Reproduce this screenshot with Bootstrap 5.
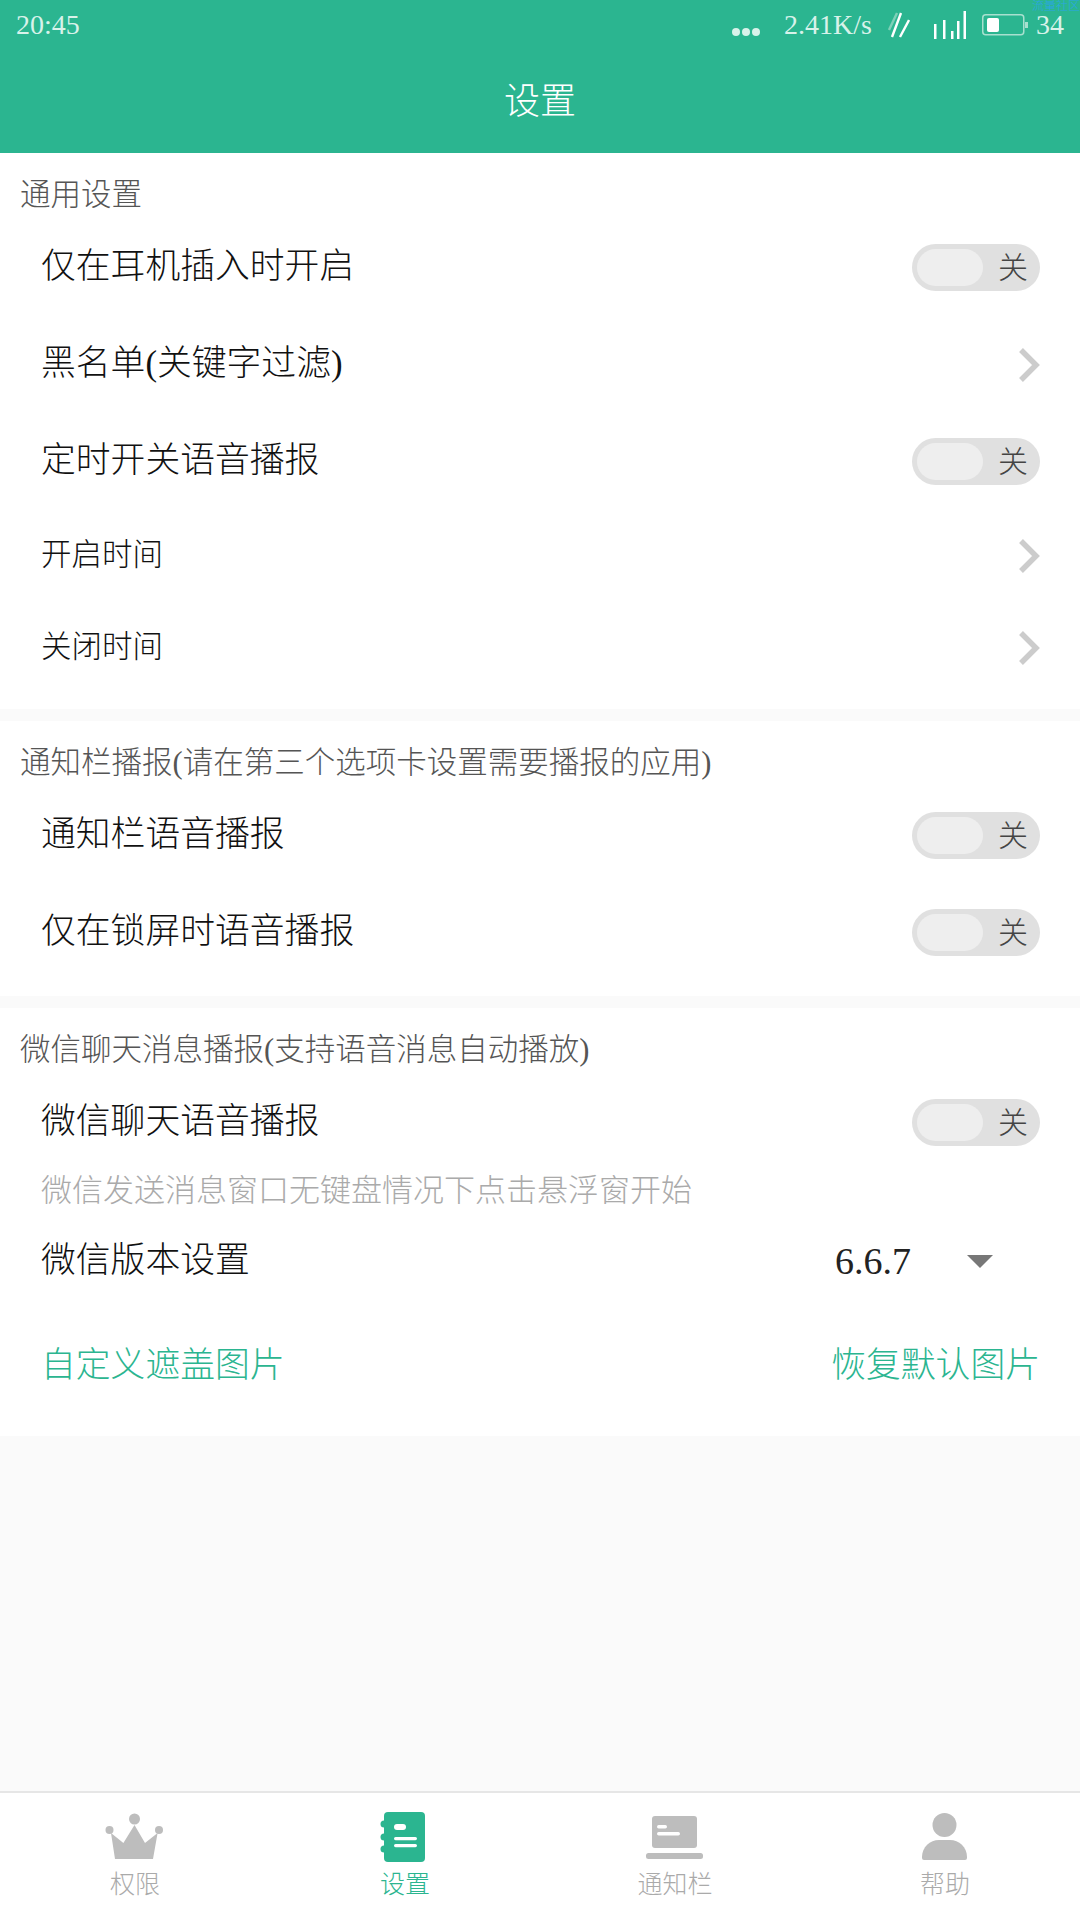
<!DOCTYPE html>
<html lang="zh-CN">
<head>
    <meta charset="UTF-8">
    <meta name="viewport" content="width=device-width, initial-scale=1">
    <title>设置</title>
    <link href="https://cdn.jsdelivr.net/npm/bootstrap@5.3.0/dist/css/bootstrap.min.css" rel="stylesheet">
    <style>
        html, body { height: 1920px; }
        body {
            background: #fafafa;
            font-family: "Liberation Serif", "Noto Sans CJK SC", serif;
            font-weight: 300;
            overflow: hidden;
        }
        .app-top { background: #2bb590; height: 153px; color: #fff; position: relative; }
        .status-line { height: 50px; padding: 0 16px; font-size: 28px; color: #d8f2ea; }
        .status-line svg { display: block; }
        .water-mark { position: absolute; top: -1px; right: 0; font-size: 12px; line-height: 14px; color: #2aa5e6; }
        .page-title { font-size: 36px; line-height: 50px; padding-top: 27px; text-align: center; }
        .setting-block { background: #fff; padding-bottom: 15px; margin-bottom: 12px; }
        .block-title { font-size: 30.5px; line-height: 48px; padding: 18px 20px 0; color: #555; }
        .setting-row { height: 97px; padding: 0 40px 0 41px; font-size: 34.8px; color: #111; }
        .setting-row.short-row { height: 92px; font-size: 30.5px; }
        .setting-row.ver-row { height: 100px; }
        .setting-row.link-row { height: 110px; color: #2bb590; }
        .switch-off { width: 128px; height: 47px; border-radius: 24px; background: #e0e0e0; padding: 5px 12px 5px 5px; font-size: 30px; color: #444; }
        .switch-knob { width: 66px; height: 37px; border-radius: 19px; background: #eee; }
        .hint-line { font-size: 31px; line-height: 40px; padding: 0 41px; color: #aaa; }
        .ver-num { font-size: 38px; color: #222; width: 132px; }
        .ver-arrow { width: 0; height: 0; border-left: 13px solid transparent; border-right: 13px solid transparent; border-top: 13px solid #777; margin-right: 7px; }
        .ver-pick { width: 205px; }
        .spacer-area { flex: 1 1 auto; }
        .tab-bar { height: 129px; background: #fff; border-top: 2px solid #e6e6e6; }
        .tab-item { width: 270px; color: #aaa; font-size: 25px; line-height: 30px; padding-top: 19px; }
        .tab-item svg { display: block; margin-bottom: 8px; }
        .tab-item.tab-on { color: #2bb590; }
    </style>
</head>
<body class="d-flex flex-column">
    <div class="app-top">
        <div class="water-mark">流量社区</div>
        <div class="status-line d-flex align-items-center">
            <span>20:45</span>
            <svg class="ms-auto" width="28" height="10" viewBox="0 0 28 10" fill="#d8f2ea" style="margin-top:14px"><circle cx="4" cy="5" r="4"/><circle cx="14" cy="5" r="4"/><circle cx="24" cy="5" r="4"/></svg>
            <span class="ms-4">2.41K/s</span>
            <svg class="ms-3" width="22" height="26" viewBox="0 0 22 26" fill="none" stroke-width="2.4"><path d="M9 1 1 18" stroke="#7fd0b8"/><path d="M13 1 4 25M21 8 12 25" stroke="#fff"/></svg>
            <svg class="ms-4" width="32" height="28" viewBox="0 0 32 28" fill="#fff"><rect x="0" y="13" width="2.5" height="15"/><rect x="9" y="9" width="2.5" height="19"/><rect x="17" y="20" width="2.5" height="8"/><rect x="23" y="10" width="2.5" height="18"/><rect x="29.5" y="0" width="2.5" height="28"/></svg>
            <svg class="ms-3" width="46" height="22" viewBox="0 0 46 22" fill="none"><rect x=".75" y=".75" width="41" height="20" rx="3" stroke="#a8e0cf" stroke-width="1.5"/><rect x="5" y="4" width="12" height="14" rx="2" fill="#fff"/><rect x="43" y="8" width="3" height="6" fill="#a8e0cf"/></svg>
            <span class="ms-2">34</span>
        </div>
        <div class="page-title">设置</div>
    </div>

    <div class="setting-block">
        <div class="block-title">通用设置</div>
        <div class="setting-row d-flex align-items-center justify-content-between">
            <span>仅在耳机插入时开启</span>
            <div class="switch-off d-flex align-items-center justify-content-between"><div class="switch-knob"></div><span>关</span></div>
        </div>
        <div class="setting-row d-flex align-items-center justify-content-between">
            <span>黑名单(关键字过滤)</span>
            <svg width="22" height="34" viewBox="0 0 22 34" fill="none" stroke="#ccc" stroke-width="5.5"><path d="M3 2 18 17 3 32"/></svg>
        </div>
        <div class="setting-row d-flex align-items-center justify-content-between">
            <span>定时开关语音播报</span>
            <div class="switch-off d-flex align-items-center justify-content-between"><div class="switch-knob"></div><span>关</span></div>
        </div>
        <div class="setting-row short-row d-flex align-items-center justify-content-between">
            <span>开启时间</span>
            <svg width="22" height="34" viewBox="0 0 22 34" fill="none" stroke="#ccc" stroke-width="5.5"><path d="M3 2 18 17 3 32"/></svg>
        </div>
        <div class="setting-row short-row d-flex align-items-center justify-content-between">
            <span>关闭时间</span>
            <svg width="22" height="34" viewBox="0 0 22 34" fill="none" stroke="#ccc" stroke-width="5.5"><path d="M3 2 18 17 3 32"/></svg>
        </div>
    </div>

    <div class="setting-block">
        <div class="block-title">通知栏播报(请在第三个选项卡设置需要播报的应用)</div>
        <div class="setting-row d-flex align-items-center justify-content-between">
            <span>通知栏语音播报</span>
            <div class="switch-off d-flex align-items-center justify-content-between"><div class="switch-knob"></div><span>关</span></div>
        </div>
        <div class="setting-row d-flex align-items-center justify-content-between">
            <span>仅在锁屏时语音播报</span>
            <div class="switch-off d-flex align-items-center justify-content-between"><div class="switch-knob"></div><span>关</span></div>
        </div>
    </div>

    <div class="setting-block mb-0">
        <div class="block-title">微信聊天消息播报(支持语音消息自动播放)</div>
        <div class="setting-row d-flex align-items-center justify-content-between">
            <span>微信聊天语音播报</span>
            <div class="switch-off d-flex align-items-center justify-content-between"><div class="switch-knob"></div><span>关</span></div>
        </div>
        <div class="hint-line">微信发送消息窗口无键盘情况下点击悬浮窗开始</div>
        <div class="setting-row ver-row d-flex align-items-center justify-content-between">
            <span>微信版本设置</span>
            <div class="ver-pick d-flex align-items-center"><span class="ver-num">6.6.7</span><div class="ver-arrow"></div></div>
        </div>
        <div class="setting-row link-row d-flex align-items-center justify-content-between">
            <span>自定义遮盖图片</span>
            <span>恢复默认图片</span>
        </div>
    </div>

    <div class="spacer-area"></div>

    <div class="tab-bar d-flex">
        <div class="tab-item d-flex flex-column align-items-center">
            <svg width="60" height="50" viewBox="0 0 60 50" fill="#bdbdbd"><circle cx="29.5" cy="7" r="5.5"/><circle cx="4.5" cy="18" r="4"/><circle cx="54" cy="18" r="4"/><path d="M6 21 18.4 31 29.5 13 40 31 52.6 21 48 47H10z"/></svg>
            <span>权限</span>
        </div>
        <div class="tab-item tab-on d-flex flex-column align-items-center">
            <svg width="60" height="50" viewBox="0 0 60 50" fill="#2bb590"><rect x="9" y="0" width="41" height="50" rx="4"/><circle cx="9" cy="12" r="3.5"/><circle cx="9" cy="25" r="3.5"/><circle cx="9" cy="37" r="3.5"/><rect x="19" y="12" width="12" height="6" rx="3" fill="#fff"/><rect x="19" y="25" width="23" height="3.2" rx="1.6" fill="#fff"/><rect x="19" y="32" width="23" height="3.2" rx="1.6" fill="#fff"/></svg>
            <span>设置</span>
        </div>
        <div class="tab-item d-flex flex-column align-items-center">
            <svg width="60" height="50" viewBox="0 0 60 50" fill="#bdbdbd"><rect x="7" y="4" width="45" height="32" rx="3"/><rect x="1" y="41" width="57" height="6" rx="2.5"/><rect x="12" y="13" width="10" height="3.5" rx="1.7" fill="#fff"/><rect x="12" y="20" width="23" height="3.5" rx="1.7" fill="#fff"/></svg>
            <span>通知栏</span>
        </div>
        <div class="tab-item d-flex flex-column align-items-center">
            <svg width="60" height="50" viewBox="0 0 60 50" fill="#bdbdbd"><circle cx="29.5" cy="13" r="12"/><path d="M7 45C7 35 15 28 24 28H35C44 28 52 35 52 45V46Q52 48 50 48H9Q7 48 7 46Z"/></svg>
            <span>帮助</span>
        </div>
    </div>

    <script src="https://cdn.jsdelivr.net/npm/bootstrap@5.3.0/dist/js/bootstrap.bundle.min.js"></script>
</body>
</html>
